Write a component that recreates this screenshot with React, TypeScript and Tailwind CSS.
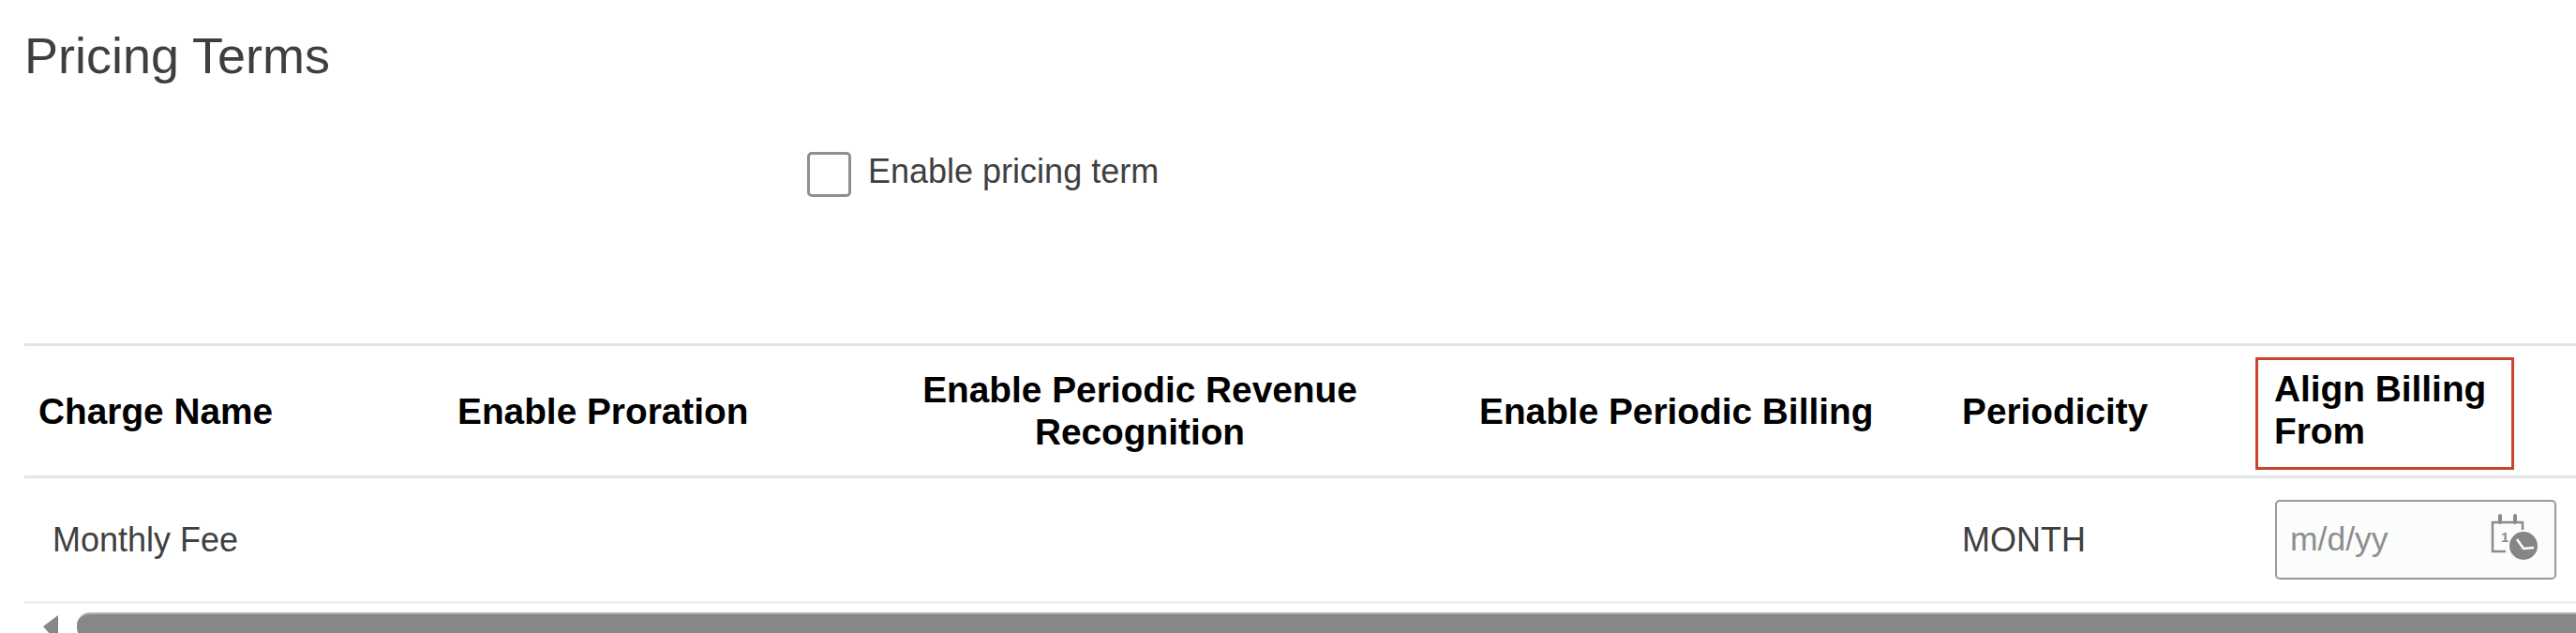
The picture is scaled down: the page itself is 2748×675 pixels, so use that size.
import React from 'react';

const bodyFont = "font-['Liberation_Sans',Arial,sans-serif]";

function CalendarClockIcon() {
  return (
    <svg width="56" height="56" viewBox="0 0 56 56" fill="none" className="absolute right-[18px] top-[12px]">
      <path d="M20 43 H6 V12 H38 V20" stroke="#8a8a8a" strokeWidth="2.5" />
      <path d="M14 5 V12 M30 5 V12" stroke="#8a8a8a" strokeWidth="4" strokeLinecap="round" />
      <text x="15" y="33" fontSize="15" fontWeight="700" fill="#8a8a8a" fontFamily="Liberation Sans, Arial, sans-serif">1</text>
      <circle cx="39" cy="37" r="15" fill="#858585" />
      <path d="M32 30 L39 40 L50 39" stroke="#ffffff" strokeWidth="2.5" fill="none" />
    </svg>
  );
}

export default function App() {
  return (
    <div className={`${bodyFont} h-[675px] w-[2748px] overflow-hidden bg-white text-[#404040]`}>
      <h1 className="pl-[26px] pt-[29px] text-[54px] leading-[60px] font-normal text-[#3f3f3f]">Pricing Terms</h1>

      {/* enable pricing term */}
      <label className="mt-[73px] ml-[861px] flex h-[48px] items-start gap-[18px]">
        <input
          type="checkbox"
          className="h-[48px] w-[47px] appearance-none rounded-[5px] border-[3px] border-[#8f8f8f] bg-white"
        />
        <span className="text-[36px] leading-[42px]">Enable pricing term</span>
      </label>

      {/* table */}
      <div className="mt-[156px] ml-[26px]">
        <div className="grid h-[144px] grid-cols-[447px_495px_496px_614px_328px_342px] items-center border-y-[3px] border-[#e2e4e8] text-[38.8px] leading-[45px] font-bold text-black">
          <div className="pl-[15px]">Charge Name</div>
          <div className="pl-[15px]">Enable Proration</div>
          <div className="text-center">
            Enable Periodic Revenue
            <br />
            Recognition
          </div>
          <div className="pl-[114px]">Enable Periodic Billing</div>
          <div className="pl-[15px]">Periodicity</div>
          <div className="mt-[6px] h-[120px] w-[276px] border-[3px] border-[#c9452f] pt-[8px] pl-[17px]">
            Align Billing
            <br />
            From
          </div>
        </div>

        <div className="grid h-[134px] grid-cols-[447px_495px_496px_614px_328px_342px] items-center border-b-[3px] border-[#efefef] text-[36px]">
          <div className="pl-[30px]">Monthly Fee</div>
          <div></div>
          <div></div>
          <div></div>
          <div className="pl-[15px]">MONTH</div>
          <div className="relative ml-[21px] w-[300px]">
            <input
              placeholder="m/d/yy"
              className="h-[85px] w-full rounded-[5px] border-[2.5px] border-[#9a9a9a] bg-[#fbfdfd] pl-[14px] text-[35.5px] outline-none placeholder:text-[#8e8e8e]"
            />
            <CalendarClockIcon />
          </div>
        </div>
      </div>

      {/* horizontal scrollbar */}
      <div className="mt-[9px] flex h-[22px] items-start">
        <svg width="20" height="30" viewBox="0 0 20 30" className="mt-[3px] ml-[44px]">
          <path d="M18 0 V30 L2 12 Z" fill="#878787" />
        </svg>
        <div className="ml-[18px] h-[30px] flex-1 rounded-l-[14px] border-t-[2px] border-[#b4b4b4] bg-[#878787]"></div>
      </div>
    </div>
  );
}
